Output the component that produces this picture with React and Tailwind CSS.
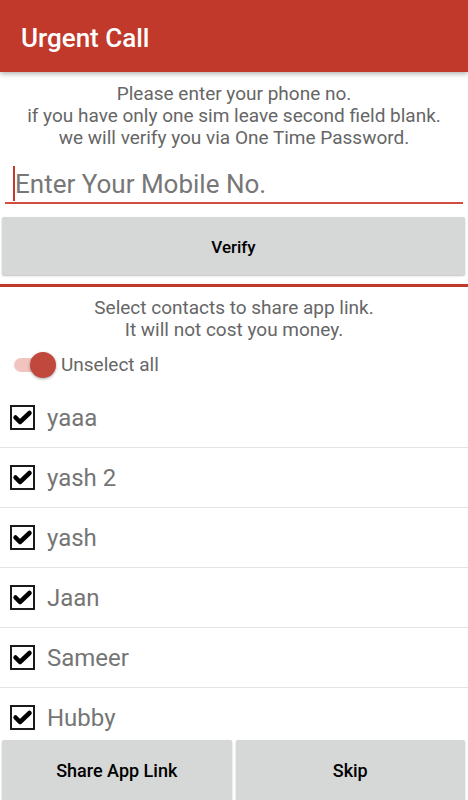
import React from "react"

const contacts = ["yaaa", "yash 2", "yash", "Jaan", "Sameer", "Hubby"]

const CheckBox = () => (
  <svg width="25" height="25" viewBox="0 0 25 25" className="shrink-0">
    <rect x="1" y="1" width="23" height="23" fill="#fff" stroke="#1a1a1a" strokeWidth="2" />
    <path d="M5.5 12.5 L10 17 L19.5 8" fill="none" stroke="#000" strokeWidth="4.5" strokeLinecap="round" strokeLinejoin="round" />
  </svg>
)

const App = () => {
  return (
    <div className="w-[468px] h-[800px] bg-white flex flex-col overflow-hidden font-['Roboto','Liberation_Sans',sans-serif]">
      <div className="h-[72px] shrink-0 bg-[#c0392b] flex items-center px-[21px] pt-[4px] shadow-[0_2px_5px_rgba(0,0,0,0.3)] relative z-10">
        <h1 className="text-white text-[26px] font-medium">Urgent Call</h1>
      </div>

      <p className="mt-[11px] text-center text-[19px] leading-[22px] text-[#666]">
        Please enter your phone no.<br />
        if you have only one sim leave second field blank.<br />
        we will verify you via One Time Password.
      </p>

      <div className="mx-[5px] pt-[17px] pb-[1px] pl-[8px] border-b-2 border-[#d24d3f]">
        <div className="flex items-center h-[35px]">
          <span className="w-[2px] h-[35px] bg-[#c0392b]" />
          <span className="text-[26px] leading-[30px] text-[#777]">Enter Your Mobile No.</span>
        </div>
      </div>

      <button className="mt-[13px] ml-[2px] mr-[3px] h-[58px] shrink-0 pt-[4px] bg-[#d6d7d7] rounded-[2px] shadow-[0_1px_2px_rgba(0,0,0,0.25)] text-[17px] font-medium text-black">
        Verify
      </button>

      <div className="mt-[9px] h-[3px] shrink-0 bg-[#c0392b]" />

      <p className="mt-[10px] text-center text-[19px] leading-[22px] text-[#666]">
        Select contacts to share app link.<br />
        It will not cost you money.
      </p>

      <div className="mt-[10px] h-[28px] shrink-0 flex items-center">
        <div className="relative ml-[14px] w-[34px] h-[14px] rounded-full bg-[#f2c4c0]">
          <div className="absolute left-[16px] top-[-6px] w-[26px] h-[26px] rounded-full bg-[#c0483d] shadow-[0_1px_3px_rgba(0,0,0,0.35)]" />
        </div>
        <span className="ml-[13px] text-[19px] text-[#666]">Unselect all</span>
      </div>

      <div className="mt-[9px] flex-1 overflow-hidden">
        {contacts.map((name, i) => (
          <div key={i} className="h-[60px] flex items-center pl-[10px] border-b border-[#e3e3e3]">
            <CheckBox />
            <span className="ml-[12px] text-[24px] text-[#757575]">{name}</span>
          </div>
        ))}
      </div>

      <div className="h-[60px] shrink-0 flex gap-[4px] pl-[2px] pr-[3px]">
        <button className="flex-1 bg-[#d6d7d7] rounded-[2px] shadow-[0_1px_2px_rgba(0,0,0,0.25)] text-[18px] font-medium text-black">
          Share App Link
        </button>
        <button className="flex-1 bg-[#d6d7d7] rounded-[2px] shadow-[0_1px_2px_rgba(0,0,0,0.25)] text-[18px] font-medium text-black">
          Skip
        </button>
      </div>
    </div>
  )
}

export default App
